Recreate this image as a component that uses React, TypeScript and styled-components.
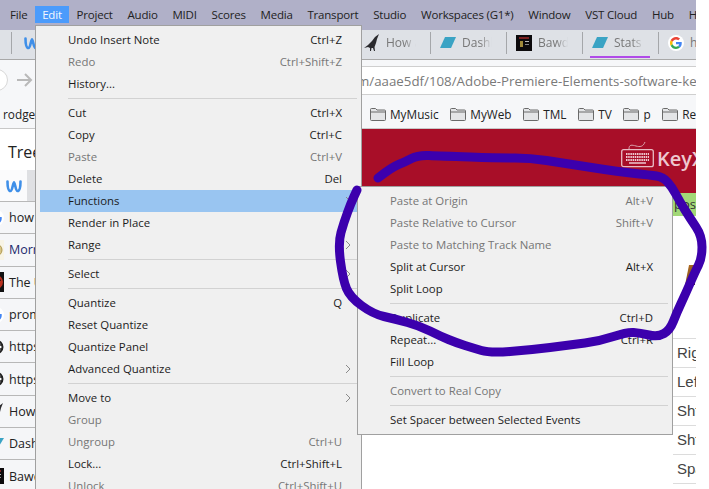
import React from "react";
import styled, { createGlobalStyle } from "styled-components";

const Global = createGlobalStyle`
  html, body { margin: 0; padding: 0; background: #fff; }
  body { font-family: "Open Sans", "Noto Sans", sans-serif; }
`;

const Stage = styled.div`
  position: relative;
  width: 709px;
  height: 489px;
  overflow: hidden;
  background: #fff;
`;
const Window = styled.div`
  display: flex;
  flex-direction: column;
  width: 696px;
  height: 489px;
  overflow: hidden;
`;
const MenuBar = styled.div`
  display: flex;
  align-items: flex-start;
  height: 30px;
  flex: none;
  padding: 6px 0 0 2.6px;
  box-sizing: border-box;
  background: #b0b0c8;
  overflow: hidden;
`;
const BarItem = styled.div<{ $open?: boolean }>`
  padding: 0 7.4px;
  height: 17px;
  line-height: 18px;
  font-size: 11.5px;
  letter-spacing: -0.2px;
  white-space: nowrap;
  color: ${(p) => (p.$open ? "#f4f8ff" : "#222")};
  background: ${(p) => (p.$open ? "#4b9bfb" : "transparent")};
`;
const TabStrip = styled.div`
  display: flex;
  align-items: stretch;
  height: 30px;
  flex: none;
  box-sizing: border-box;
  padding-left: 11px;
  background: #dee1e6;
  border-bottom: 1px solid #a8a8a8;
  overflow: hidden;
`;
const Tab = styled.div<{ $width?: number; $lead?: number; $current?: boolean }>`
  position: relative;
  flex: none;
  width: ${(p) => p.$width ?? 76}px;
  box-sizing: border-box;
  display: flex;
  align-items: center;
  gap: 6px;
  padding: 0 0 4px ${(p) => p.$lead ?? 10}px;
  font-size: 12px;
  color: #777;
  white-space: nowrap;
  overflow: hidden;
  &::before {
    content: "";
    position: absolute;
    left: 0;
    top: 2px;
    bottom: 5px;
    width: 1px;
    background: #a5a7aa;
  }
  &::after {
    content: ${(p) => (p.$current ? '""' : "none")};
    position: absolute;
    left: 8px;
    width: 60px;
    bottom: 1px;
    height: 2px;
    background: #b04ae8;
  }
`;
const TabTitle = styled.span`
  display: block;
  width: 30px;
  overflow: hidden;
  -webkit-mask-image: linear-gradient(90deg, #000 60%, transparent 100%);
  mask-image: linear-gradient(90deg, #000 60%, transparent 100%);
`;
const AddressRow = styled.div`
  display: flex;
  align-items: flex-end;
  height: 35px;
  flex: none;
  box-sizing: border-box;
  background: #f6f7f9;
  padding-top: 6px;
`;
const NavButtons = styled.div`
  flex: none;
  width: 36px;
  height: 29px;
  display: flex;
  align-items: center;
  position: relative;
  overflow: hidden;
`;
const AddressBox = styled.div`
  flex: 1;
  height: 29px;
  box-sizing: border-box;
  background: #fff;
  border-top: 1px solid #cfcfcf;
  border-bottom: 1px solid #cfcfcf;
  font-size: 13.3px;
  line-height: 28px;
  color: #7a7a7a;
  white-space: nowrap;
  overflow: hidden;
  padding-left: 321px;
`;
const Bookmarks = styled.div`
  display: flex;
  align-items: center;
  height: 34px;
  flex: none;
  box-sizing: border-box;
  background: #f6f7f9;
  border-bottom: 1px solid #c8c8c8;
  font-size: 11.8px;
  color: #222;
  padding: 5px 0 0 3px;
  white-space: nowrap;
  overflow: hidden;
`;
const BookmarkStub = styled.span`
  flex: none;
  width: 367px;
`;
const Bookmark = styled.span`
  flex: none;
  display: flex;
  align-items: center;
  gap: 4px;
  margin-right: 11.7px;
`;
const Page = styled.div`
  flex: 1;
  display: flex;
  min-height: 0;
`;
const Sidebar = styled.div`
  flex: none;
  width: 35px;
  background: #f5f6f8;
  overflow: hidden;
`;
const TreeTitle = styled.div`
  height: 41px;
  box-sizing: border-box;
  padding: 12px 0 0 8px;
  background: #fff;
  font-size: 16px;
  line-height: 22px;
  color: #222;
  white-space: nowrap;
`;
const SideTabs = styled.div`
  display: flex;
  height: 32px;
  border-bottom: 1px solid #b8b8b8;
  box-sizing: border-box;
`;
const SideTabIcon = styled.div`
  flex: none;
  width: 27px;
  display: flex;
  align-items: center;
  justify-content: center;
  background: #fbfbfc;
`;
const SideTabRest = styled.div`
  flex: 1;
  background: #dfe0e3;
`;
const SideRow = styled.div<{ $link?: boolean }>`
  display: flex;
  align-items: center;
  gap: 5px;
  height: 32.3px;
  box-sizing: border-box;
  border-bottom: 1px solid #b8b8b8;
  margin-left: -12px;
  font-size: 12.5px;
  white-space: nowrap;
  color: ${(p) => (p.$link ? "#1a2a6c" : "#222")};
`;
const Main = styled.div`
  flex: 1;
  min-width: 0;
  display: flex;
  flex-direction: column;
  overflow: hidden;
`;
const Banner = styled.div`
  flex: none;
  height: 64px;
  background: #a80e28;
  display: flex;
  justify-content: flex-end;
  align-items: flex-start;
  overflow: hidden;
  padding-top: 11px;
  box-sizing: border-box;
`;
const LogoText = styled.span`
  flex: none;
  width: 39px;
  margin-left: 3px;
  margin-top: 5px;
  overflow: hidden;
  font-size: 20px;
  line-height: 28px;
  font-weight: 600;
  color: #eec8cf;
  white-space: nowrap;
`;
const GreenStrip = styled.div`
  flex: none;
  height: 23px;
  background: #a2d877;
  font-size: 13px;
  line-height: 23px;
  color: #333;
  text-align: right;
  white-space: nowrap;
  overflow: hidden;
`;
const RightColumn = styled.div`
  flex: 1;
  align-self: flex-end;
  width: 23px;
  display: flex;
  flex-direction: column;
`;
const Thumb = styled.div`
  flex: none;
  width: 10px;
  height: 20px;
  margin: 49px 0 0 12px;
  background: linear-gradient(120deg, #c97a20, #4a3020);
  clip-path: polygon(40% 0, 100% 0, 100% 100%, 0 100%);
`;
const CellStack = styled.div`
  margin-top: 53px;
  border-top: 1px solid #dcdcdc;
`;
const Cell = styled.div`
  height: 29px;
  box-sizing: border-box;
  border-bottom: 1px solid #dcdcdc;
  padding-left: 4px;
  font-family: "Liberation Sans", Arial, sans-serif;
  font-size: 15px;
  line-height: 28px;
  color: #444;
  white-space: nowrap;
  overflow: hidden;
`;
const Menu = styled.div<{ $sub?: boolean }>`
  position: absolute;
  box-sizing: border-box;
  background: #f0f0f0;
  border: 1px solid #a0a0a0;
  padding: 3px 4px;
  font-size: 11.4px;
  ${(p) =>
    p.$sub
      ? "left: 357px; top: 186px; width: 316px;"
      : "left: 35px; top: 25px; width: 327px; height: 480px;"}
`;
const Row = styled.div<{ $disabled?: boolean; $active?: boolean; $right: number }>`
  display: flex;
  align-items: flex-start;
  justify-content: space-between;
  height: 22px;
  line-height: 22px;
  padding: 0 ${(p) => p.$right}px 0 28px;
  white-space: nowrap;
  color: ${(p) => (p.$disabled ? "#767676" : "#1c1c1c")};
  background: ${(p) => (p.$active ? "#99c5f1" : "transparent")};
`;
const Sep = styled.div`
  height: 1px;
  margin: 3px 0 3px 28px;
  background: #d2d2d2;
`;
const Chevron = styled.svg`
  flex: none;
  align-self: center;
  margin-right: -9px;
`;
const Ink = styled.svg`
  position: absolute;
  left: 0;
  top: 0;
  pointer-events: none;
`;

type Item = { t: string; k?: string; off?: boolean; sub?: boolean; on?: boolean } | "-";

const edit: Item[] = [
  { t: "Undo Insert Note", k: "Ctrl+Z" },
  { t: "Redo", k: "Ctrl+Shift+Z", off: true },
  { t: "History..." },
  "-",
  { t: "Cut", k: "Ctrl+X" },
  { t: "Copy", k: "Ctrl+C" },
  { t: "Paste", k: "Ctrl+V", off: true },
  { t: "Delete", k: "Del" },
  { t: "Functions", sub: true, on: true },
  { t: "Render in Place" },
  { t: "Range", sub: true },
  "-",
  { t: "Select", sub: true },
  "-",
  { t: "Quantize", k: "Q" },
  { t: "Reset Quantize" },
  { t: "Quantize Panel" },
  { t: "Advanced Quantize", sub: true },
  "-",
  { t: "Move to", sub: true },
  { t: "Group", off: true },
  { t: "Ungroup", k: "Ctrl+U", off: true },
  { t: "Lock...", k: "Ctrl+Shift+L" },
  { t: "Unlock", k: "Ctrl+Shift+U", off: true },
];
const functions: Item[] = [
  { t: "Paste at Origin", k: "Alt+V", off: true },
  { t: "Paste Relative to Cursor", k: "Shift+V", off: true },
  { t: "Paste to Matching Track Name", off: true },
  { t: "Split at Cursor", k: "Alt+X" },
  { t: "Split Loop" },
  "-",
  { t: "Duplicate", k: "Ctrl+D" },
  { t: "Repeat...", k: "Ctrl+R" },
  { t: "Fill Loop" },
  "-",
  { t: "Convert to Real Copy", off: true },
  "-",
  { t: "Set Spacer between Selected Events" },
];
const bar = ["File", "Edit", "Project", "Audio", "MIDI", "Scores", "Media", "Transport", "Studio", "Workspaces (G1*)", "Window", "VST Cloud", "Hub", "Help"];

const MenuRows = ({ items, right }: { items: Item[]; right: number }) => (
  <>
    {items.map((it, i) =>
      it === "-" ? (
        <Sep key={i} />
      ) : (
        <Row key={i} $disabled={it.off} $active={it.on} $right={right}>
          <span>{it.t}</span>
          {it.k && <span>{it.k}</span>}
          {it.sub && (
            <Chevron width="6" height="10" viewBox="0 0 6 10">
              <path d="M1 1l4 4-4 4" fill="none" stroke="#8a8a8a" strokeWidth="1" />
            </Chevron>
          )}
        </Row>
      )
    )}
  </>
);

const Weebly = () => (
  <svg width="16" height="14" viewBox="0 0 16 14" style={{ flex: "none" }}>
    <path d="M1.500 2.500C1.500 8 2.500 12 4.500 12 6.500 12 6.500 5 8 3.500 9.500 5 9.500 12 11.500 12 13.500 12 14.500 8 14.500 2.500" fill="none" stroke="#3f8fe8" strokeWidth="2.600" strokeLinecap="round" strokeLinejoin="round" />
  </svg>
);
const Crow = () => (
  <svg width="16" height="17" viewBox="0 0 16 17" style={{ flex: "none" }}>
    <path d="M15 0 L11 3 L8 7 L4 11 L0 14 L4 13 L6 14 L6 17 L7 17 L7.500 14 L9 14 L10 17 L11 17 L10.500 13 L12 9 L13 5 Z" fill="#2a2a2e" />
  </svg>
);
const Para = ({ size = 16, down }: { size?: number; down?: boolean }) => (
  <svg width={size} height={size * 0.7} viewBox="0 0 16 11" style={{ flex: "none" }}>
    {down ? <path d="M0 0H16L9 11H5Z" fill="#3aa3c4" /> : <path d="M5 0H16L11 11H0Z" fill="#3aa3c4" />}
  </svg>
);
const Bawdy = () => (
  <svg width="16" height="16" viewBox="0 0 16 16" style={{ flex: "none" }}>
    <rect width="16" height="16" fill="#0c0a0c" />
    <rect x="3" y="2" width="10" height="2" fill="#7a2020" />
    <rect x="4" y="6" width="3" height="6" fill="#a08a3a" />
    <rect x="9" y="6" width="4" height="1" fill="#bbb" />
    <rect x="9" y="9" width="4" height="1" fill="#888" />
  </svg>
);
const GLogo = ({ size = 16 }: { size?: number }) => (
  <svg width={size} height={size} viewBox="0 0 48 48" style={{ flex: "none" }}>
    <circle cx="24" cy="24" r="24" fill="#fff" />
    <g transform="translate(6 6) scale(.75)">
      <path fill="#EA4335" d="M24 9.500c3.500 0 6.700 1.200 9.200 3.600l6.900-6.900C35.900 2.400 30.500 0 24 0 14.600 0 6.500 5.400 2.600 13.200l8 6.200C12.500 13.700 17.800 9.500 24 9.500z" />
      <path fill="#4285F4" d="M47 24.500c0-1.600-.1-3.100-.4-4.500H24v9h12.900c-.6 3-2.200 5.500-4.800 7.200l7.700 6c4.500-4.200 7.200-10.300 7.200-17.700z" />
      <path fill="#FBBC05" d="M10.600 28.600c-.5-1.500-.8-3-.8-4.600s.3-3.200.8-4.600l-8-6.200C.9 16.500 0 20.100 0 24s.9 7.500 2.600 10.800l8-6.200z" />
      <path fill="#34A853" d="M24 48c6.500 0 11.900-2.100 15.900-5.800l-7.700-6c-2.100 1.400-4.900 2.300-8.100 2.300-6.200 0-11.500-4.200-13.400-9.900l-8 6.200C6.500 42.600 14.600 48 24 48z" />
    </g>
  </svg>
);
const Folder = () => (
  <svg width="16" height="13" viewBox="0 0 16 13" style={{ flex: "none" }}>
    <path d="M.5 2V1.500a1 1 0 0 1 1-1h4l1.500 1.500h7.500a1 1 0 0 1 1 1v8.500a1 1 0 0 1-1 1h-13a1 1 0 0 1-1-1z" fill="#e4e5e7" stroke="#6a6a6a" />
    <path d="M.5 4h15" stroke="#6a6a6a" />
  </svg>
);
const Globe = () => (
  <svg width="16" height="16" viewBox="0 0 16 16" style={{ flex: "none" }}>
    <circle cx="8" cy="8" r="6.500" fill="#fff" stroke="#222" strokeWidth="2" />
    <ellipse cx="8" cy="8" rx="2.800" ry="6.500" fill="none" stroke="#222" strokeWidth="1.300" />
    <path d="M1.500 6h13M1.500 10h13" stroke="#222" strokeWidth="1.300" />
  </svg>
);
const Medal = () => (
  <svg width="16" height="20" viewBox="0 0 16 20" style={{ flex: "none" }}>
    <rect width="16" height="20" fill="#f8f4e6" />
    <circle cx="8" cy="10" r="6" fill="#d8c486" stroke="#b09a50" />
  </svg>
);
const RedBall = () => (
  <svg width="16" height="20" viewBox="0 0 16 20" style={{ flex: "none" }}>
    <rect width="16" height="20" fill="#111" />
    <circle cx="8" cy="10" r="7" fill="#b8301f" />
    <path d="M4 12l9-4" stroke="#111" strokeWidth="1" />
  </svg>
);
const Keyboard = () => (
  <svg width="33" height="28" viewBox="0 0 33 28" style={{ flex: "none" }}>
    <path d="M8 9c0-5 3-4 7-3s7 1 9-4" fill="none" stroke="#dba3ad" strokeWidth="1" />
    <rect x=".7" y="9.700" width="31.600" height="17" rx="2" fill="none" stroke="#e8bcc4" strokeWidth="1.300" />
    <path d="M5 14h23M5 17h23M5 20h23" stroke="#eec8cf" strokeWidth="2" strokeDasharray="1.500 .7" />
    <path d="M8 23h17" stroke="#eec8cf" strokeWidth="1.500" />
  </svg>
);

const inkPoints: [number, number][] = [
  [378, 178], [392, 167], [405, 162], [418, 155], [440, 156], [500, 158], [530, 158], [563, 163],
  [620, 172], [650, 175], [663, 177], [672, 187], [680, 202], [690, 218], [702, 236], [702, 258],
  [695, 272], [685, 295], [677, 312], [670, 330], [658, 337], [640, 333], [627, 332], [600, 341],
  [570, 345], [530, 350], [490, 353], [473, 348], [457, 343], [440, 336], [420, 326], [395, 319],
  [373, 314], [350, 297], [343, 280], [338, 243], [344, 222], [351, 203], [357, 190],
];
const inkPath = inkPoints.reduce((d, [x, y], i, a) => {
  if (i === 0) return `M${x} ${y}`;
  if (i === a.length - 1) return `${d} L${x} ${y}`;
  const [nx, ny] = a[i + 1];
  return `${d} Q${x} ${y} ${(x + nx) / 2} ${(y + ny) / 2}`;
}, "");

const sideRows: { t: string; icon: React.ReactNode; link?: boolean }[] = [
  { t: "how", icon: <GLogo /> },
  { t: "Morr", icon: <Medal />, link: true },
  { t: "The U", icon: <RedBall /> },
  { t: "prom", icon: <GLogo /> },
  { t: "https", icon: <Globe /> },
  { t: "https", icon: <Globe /> },
  { t: "How", icon: <Crow /> },
  { t: "Dash", icon: <Para down /> },
  { t: "Bawd", icon: <Bawdy /> },
];

export default function App() {
  return (
    <Stage>
      <Global />
      <Window>
        <MenuBar>
          {bar.map((b) => (
            <BarItem key={b} $open={b === "Edit"}>{b}</BarItem>
          ))}
        </MenuBar>
        <TabStrip>
          <Tab $width={343} $lead={13}><Weebly /></Tab>
          <Tab><Crow /><TabTitle>How a</TabTitle></Tab>
          <Tab><Para /><TabTitle>Dashb</TabTitle></Tab>
          <Tab><Bawdy /><TabTitle>Bawdy</TabTitle></Tab>
          <Tab $current><Para /><TabTitle>Stats |</TabTitle></Tab>
          <Tab><GLogo /><span>h</span></Tab>
        </TabStrip>
        <AddressRow>
          <NavButtons>
            <svg width="36" height="29" viewBox="0 0 36 29">
              <circle cx="-3" cy="14" r="10.500" fill="#fff" stroke="#d8d8d8" />
              <path d="M17 14h14M25 8l6 6-6 6" fill="none" stroke="#b9b9b9" strokeWidth="2" />
            </svg>
          </NavButtons>
          <AddressBox>m/aaae5df/108/Adobe-Premiere-Elements-software-key</AddressBox>
        </AddressRow>
        <Bookmarks>
          <BookmarkStub>rodge</BookmarkStub>
          <Bookmark><Folder />MyMusic</Bookmark>
          <Bookmark><Folder />MyWeb</Bookmark>
          <Bookmark><Folder />TML</Bookmark>
          <Bookmark><Folder />TV</Bookmark>
          <Bookmark><Folder />p</Bookmark>
          <Bookmark><Folder />Re</Bookmark>
        </Bookmarks>
        <Page>
          <Sidebar>
            <TreeTitle>Tree</TreeTitle>
            <SideTabs>
              <SideTabIcon><Weebly /></SideTabIcon>
              <SideTabRest />
            </SideTabs>
            {sideRows.map((r, i) => (
              <SideRow key={i} $link={r.link}>{r.icon}{r.t}</SideRow>
            ))}
          </Sidebar>
          <Main>
            <Banner>
              <Keyboard />
              <LogoText>KeyX</LogoText>
            </Banner>
            <GreenStrip>pos</GreenStrip>
            <RightColumn>
              <Thumb />
              <CellStack>
                <Cell>Right</Cell>
                <Cell>Left</Cell>
                <Cell>Shft</Cell>
                <Cell>Shft</Cell>
                <Cell>Spa</Cell>
              </CellStack>
            </RightColumn>
          </Main>
        </Page>
      </Window>
      <Menu><MenuRows items={edit} right={15} /></Menu>
      <Menu $sub><MenuRows items={functions} right={15} /></Menu>
      <Ink width="709" height="489" viewBox="0 0 709 489">
        <path d={inkPath} fill="none" stroke="#3c00ad" strokeWidth="9" strokeLinecap="round" strokeLinejoin="round" />
      </Ink>
    </Stage>
  );
}
